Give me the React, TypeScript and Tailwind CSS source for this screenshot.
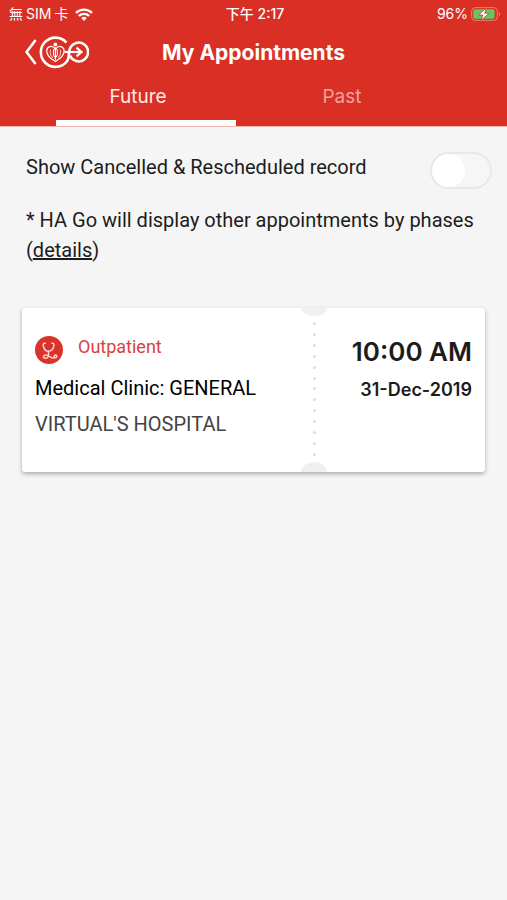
import { useState } from "react";

function WifiIcon() {
  return (
    <svg viewBox="0 0 18 13" className="h-[13px] w-[18px]" fill="none" stroke="white" strokeWidth="2.4" aria-hidden="true">
      <path d="M1 4.9a11.4 11.4 0 0 1 16 0" />
      <path d="M3.9 8a7.3 7.3 0 0 1 10.2 0" />
      <path d="M9 13 6.2 10.1a4 4 0 0 1 5.6 0Z" fill="white" stroke="none" />
    </svg>
  );
}

function BatteryIcon() {
  return (
    <svg viewBox="0 0 30 16" className="h-4 w-[30px]" aria-hidden="true">
      <rect x="0.6" y="1.6" width="25.8" height="12.8" rx="3.6" fill="none" stroke="#e8807a" strokeWidth="1" />
      <rect x="2.2" y="3.2" width="21.4" height="9.6" rx="2" fill="#5fca5f" />
      <path d="M28 6v4.4c1.5-.6 1.5-3.8 0-4.4Z" fill="#e8807a" />
      <path d="m15.4 1.8-8 7.2h4.4l-1.8 5.4 8.2-7.2h-4.5Z" fill="white" stroke="#da2f24" strokeWidth="0.8" />
    </svg>
  );
}

function BackIcon() {
  return (
    <svg viewBox="0 0 13 28" className="h-7 w-[13px]" fill="none" stroke="white" strokeWidth="2.6" aria-hidden="true">
      <path d="M11.6 2 2.6 14l9 12" />
    </svg>
  );
}

function GoLogo() {
  return (
    <svg viewBox="0 0 50 34" className="h-[34px] w-[50px]" fill="none" stroke="white" aria-hidden="true">
      <path d="M27.4 7.6A14.6 14.6 0 1 0 28 26.2C30.6 23.4 29.4 17.6 31 13.4A9.4 9.4 0 1 1 31 20.6" strokeWidth="2.6" />
      <path d="M25.5 17H42" strokeWidth="2.2" />
      <path d="m37.5 12.6 5 4.4-5 4.4" strokeWidth="2.2" />
      <path d="M16.4 26.5C11 23.5 7.6 20 7.7 15.8c.1-4.5 5.3-6 8.7-2 3.4-4 8.6-2.5 8.7 2 .1 4.2-3.3 7.7-8.7 10.7Z" strokeWidth="1.2" />
      <path d="M13.6 22.8c-2.5-3-3-6-2-8.2M19.2 22.8c2.5-3 3-6 2-8.2" strokeWidth="0.8" />
      <path d="M16.4 12v13" strokeWidth="1.2" />
      <ellipse cx="16.4" cy="17.6" rx="2" ry="4.4" strokeWidth="1.1" />
      <circle cx="16.4" cy="9.4" r="1.9" fill="white" stroke="none" />
    </svg>
  );
}

function StethoscopeIcon() {
  return (
    <svg viewBox="0 0 28 28" className="h-7 w-7 shrink-0" aria-hidden="true">
      <circle cx="14" cy="14" r="14" fill="#d9342b" />
      <g fill="none" stroke="#ffd0cb" strokeWidth="1.5" strokeLinecap="round">
        <path d="M10.3 7.2c-2.2-.2-2.3 1.4-1.9 3 .7 3 2.4 5 5.1 5s4.6-2 5.3-5c.4-1.6.3-3.2-1.9-3" />
        <path d="M13.5 15.2v3.6c0 2.2-1.5 3.6-3.2 3.5-2.6-.2-2.3-3.3.2-3.4 3.3-.1 4.6 3.4 7.8 3 1.1-.1 1.6-.6 1.6-.6" />
        <circle cx="20.4" cy="20.4" r="1.3" />
      </g>
    </svg>
  );
}

const tabs = ["Future", "Past"];

export default function App() {
  const [tab, setTab] = useState("Future");
  return (
    <div className="min-h-screen bg-[#f5f5f5] font-['Inter','Noto_Sans_CJK_TC',sans-serif] text-[#1c1c1c]">
      <header className="border-b border-[#f3b5b0] bg-[#da2f24] text-white">
        <div className="grid h-7 grid-cols-3 items-center pr-[6px] pl-[9px] text-sm">
          <div className="flex items-center gap-[7px]">
            <span className="flex gap-[3px]">
              <span>無</span>
              <span>SIM</span>
              <span>卡</span>
            </span>
            <WifiIcon />
          </div>
          <div className="text-center font-medium">下午 2:17</div>
          <div className="flex items-center justify-end gap-[3px]">
            <span>96%</span>
            <BatteryIcon />
          </div>
        </div>
        <div className="grid h-12 grid-cols-[1fr_auto_1fr] items-center px-6">
          <button type="button" aria-label="Back" className="flex items-center gap-[2px]">
            <BackIcon />
            <GoLogo />
          </button>
          <h1 className="pt-px text-[21px] font-bold">My Appointments</h1>
        </div>
        <nav role="tablist" className="flex h-[50px] px-9">
          {tabs.map((name) => (
            <button
              key={name}
              type="button"
              role="tab"
              aria-selected={tab === name}
              onClick={() => setTab(name)}
              className={`relative w-[204px] pb-2 text-[19px] ${tab === name ? "text-[#ffe9e7]" : "text-[#f3a39d]"}`}
            >
              {name}
              {tab === name && <span className="absolute bottom-0 left-5 h-[6px] w-[180px] bg-white" />}
            </button>
          ))}
        </nav>
      </header>

      <main className="pt-[25px] font-['Roboto','Noto_Sans_CJK_TC',sans-serif]">
        <div className="flex items-start justify-between pr-[15px] pl-[26px]">
          <label htmlFor="show-cancelled" className="text-xl leading-[30px]">
            Show Cancelled &amp; Rescheduled record
          </label>
          <input
            id="show-cancelled"
            type="checkbox"
            role="switch"
            className="h-[37px] w-[62px] appearance-none rounded-full border-2 border-[#e8e8e8] bg-[#f6f6f6] before:block before:h-[33px] before:w-[33px] before:rounded-full before:bg-white checked:bg-[#da2f24] checked:before:translate-x-[25px]"
          />
        </div>
        <p className="mt-4 pr-6 pl-[26px] text-xl leading-[30px]">
          * HA Go will display other appointments by phases{" "}
          <span className="whitespace-nowrap">
            (<a href="#details" className="underline">details</a>)
          </span>
        </p>

        <article className="mx-[22px] mt-[43px] flex h-[164px] rounded-[3px] bg-white shadow-[0_2px_4px_rgba(0,0,0,0.3)]">
          <div className="min-w-0 flex-1 pt-7 pl-[13px]">
            <div className="flex gap-[15px]">
              <StethoscopeIcon />
              <span className="text-lg leading-[22px] text-[#d9423b]">Outpatient</span>
            </div>
            <h2 className="mt-2 text-xl leading-8 text-black">Medical Clinic: GENERAL</h2>
            <p className="mt-1 text-xl leading-8 text-[#444444]">VIRTUAL'S HOSPITAL</p>
          </div>
          <div className="flex w-[26px] flex-col items-center justify-between" aria-hidden="true">
            <span className="h-2 w-[26px] rounded-b-[50%_100%] bg-[#f0f0f0]" />
            <div className="flex h-[134px] flex-col justify-between">
              {Array.from({ length: 13 }, (_, i) => (
                <span key={i} className="h-[3px] w-[3px] rounded-full bg-[#dddddd]" />
              ))}
            </div>
            <span className="h-[10px] w-[26px] rounded-t-[50%_100%] bg-[#f0f0f0]" />
          </div>
          <div className="w-[158px] pt-7 pr-[13px] text-right font-['Inter',sans-serif] whitespace-nowrap">
            <p className="text-[26px] leading-8 font-semibold">10:00 AM</p>
            <p className="mt-2 text-lg leading-7 font-semibold">31-Dec-2019</p>
          </div>
        </article>
      </main>
    </div>
  );
}
